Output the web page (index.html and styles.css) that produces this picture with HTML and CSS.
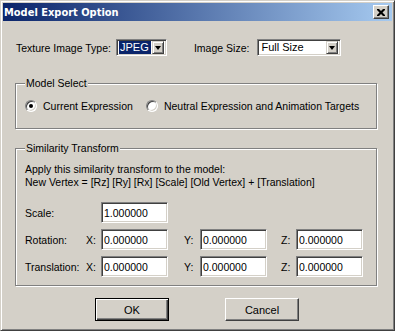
FILE: index.html
```html
<!DOCTYPE html>
<html lang="en">
<head>
    <meta charset="UTF-8">
    <link rel="stylesheet" href="styles.css">
</head>
<body>
<div class="window">
    <div class="titlebar">
        <span class="title">Model Export Option</span>
        <span class="closebtn">
            <svg width="8" height="7" viewBox="0 0 8 7"><path d="M0 0h2l2 2 2-2h2v1l-2.5 2.5L8 6v1H6L4 5 2 7H0V6l2.5-2.5L0 1z" fill="#000"/></svg>
        </span>
    </div>
    <div class="content">
        <div class="toprow">
            <span class="lbl">Texture Image Type:</span>
            <div class="combo combo-type">
                <span class="combo-val selected">JPEG</span>
                <span class="dropbtn"><i class="arrow"></i></span>
            </div>
            <span class="lbl lbl-size">Image Size:</span>
            <div class="combo combo-size">
                <span class="combo-val">Full Size</span>
                <span class="dropbtn"><i class="arrow"></i></span>
            </div>
        </div>

        <!-- model select -->
        <div class="group group-model">
            <span class="legend">Model Select</span>
            <div class="radios">
                <label class="radio"><span class="dot checked"></span>Current Expression</label>
                <label class="radio"><span class="dot"></span>Neutral Expression and Animation Targets</label>
            </div>
        </div>

        <!-- similarity transform -->
        <div class="group group-sim">
            <span class="legend">Similarity Transform</span>
            <p class="desc">Apply this similarity transform to the model:<br>New Vertex = [Rz] [Ry] [Rx] [Scale] [Old Vertex] + [Translation]</p>
            <div class="grid">
                <span class="rowlbl">Scale:</span>
                <span></span>
                <span class="field">1.000000</span>
                <span></span><span></span><span></span><span></span>

                <span class="rowlbl">Rotation:</span>
                <span class="axis">X:</span>
                <span class="field">0.000000</span>
                <span class="axis axis-y">Y:</span>
                <span class="field">0.000000</span>
                <span class="axis axis-z">Z:</span>
                <span class="field">0.000000</span>

                <span class="rowlbl">Translation:</span>
                <span class="axis">X:</span>
                <span class="field">0.000000</span>
                <span class="axis axis-y">Y:</span>
                <span class="field">0.000000</span>
                <span class="axis axis-z">Z:</span>
                <span class="field">0.000000</span>
            </div>
        </div>

        <div class="buttons">
            <span class="btn btn-default">OK</span>
            <span class="btn">Cancel</span>
        </div>
    </div>
</div>
</body>
</html>
```

FILE: styles.css
```css
* {
    margin: 0;
    padding: 0;
    box-sizing: border-box;
}

body {
    background: #d4d0c8;
    font-family: "Liberation Sans", Arial, sans-serif;
    font-size: 10.5px;
    color: #000;
    white-space: nowrap;
}

.window {
    width: 395px;
    height: 331px;
    border: 1px solid;
    border-color: #d4d0c8 #404040 #404040 #d4d0c8;
    box-shadow: inset 1px 1px 0 #fff, inset -1px -1px 0 #808080;
    padding: 2px;
    background: #d4d0c8;
}

.titlebar {
    height: 18px;
    background: linear-gradient(to right, #0a246a, #a6caf0);
    display: flex;
    align-items: center;
    justify-content: space-between;
    padding: 0 3px 0 1px;
}

.title {
    color: #fff;
    font-family: "DejaVu Sans", sans-serif;
    font-weight: bold;
    font-size: 9.9px;
}

.closebtn {
    width: 16px;
    height: 14px;
    background: #d4d0c8;
    border: 1px solid;
    border-color: #fff #404040 #404040 #fff;
    box-shadow: inset -1px -1px 0 #808080;
    display: flex;
    align-items: center;
    justify-content: center;
}

.content {
    padding: 18px 0 0 13px;
}

.toprow {
    display: flex;
    align-items: center;
    height: 17px;
}

.lbl-size {
    margin-left: 27px;
}

.combo {
    height: 17px;
    margin-left: 5px;
    background: #fff;
    border: 1px solid;
    border-color: #808080 #fff #fff #808080;
    box-shadow: inset 1px 1px 0 #404040, inset -1px -1px 0 #d4d0c8;
    display: flex;
    align-items: center;
    padding: 2px;
}

.combo-type {
    width: 51px;
}

.combo-size {
    width: 84px;
    margin-left: 8px;
}

.combo-val {
    flex: 1;
    height: 13px;
    line-height: 13px;
    padding-left: 1px;
    font-size: 11px;
}

.combo-val.selected {
    background: #0a246a;
    color: #fff;
    margin-right: 1px;
}

.dropbtn {
    width: 12px;
    height: 13px;
    background: #d4d0c8;
    border: 1px solid;
    border-color: #d4d0c8 #404040 #404040 #d4d0c8;
    box-shadow: inset 1px 1px 0 #fff, inset -1px -1px 0 #808080;
    display: flex;
    align-items: center;
    justify-content: center;
}

.arrow {
    width: 0;
    height: 0;
    border-left: 3.5px solid transparent;
    border-right: 3.5px solid transparent;
    border-top: 4px solid #000;
}

.group {
    width: 362px;
    margin-left: -1px;
    border: 1px solid #808080;
    box-shadow: inset 1px 1px 0 #fff, 1px 1px 0 #fff;
    padding: 0 9px;
}

.legend {
    display: block;
    width: max-content;
    background: #d4d0c8;
    padding: 0 1px;
    margin-top: -7px;
    height: 13px;
    line-height: 13px;
}

.group-model {
    height: 46px;
    margin-top: 27px;
}

.radios {
    display: flex;
    gap: 13px;
    margin-top: 9px;
}

.radio {
    display: flex;
    align-items: center;
    height: 13px;
}

.dot {
    width: 12px;
    height: 12px;
    border-radius: 50%;
    background: #fff;
    border: 1px solid;
    border-color: #808080 #fff #fff #808080;
    box-shadow: inset 1px 1px 0 #404040, inset -1px -1px 0 #d4d0c8;
    margin-right: 6px;
    position: relative;
}

.dot.checked::after {
    content: "";
    position: absolute;
    left: 3px;
    top: 3px;
    width: 4px;
    height: 4px;
    border-radius: 50%;
    background: #000;
}

.group-sim {
    height: 138px;
    margin-top: 19px;
}

.desc {
    line-height: 13px;
    margin-top: 8px;
}

.grid {
    display: grid;
    grid-template-columns: 61px 15px 67px 32px 67px 29px 67px;
    grid-auto-rows: 21px;
    row-gap: 6px;
    margin-top: 13px;
    align-items: center;
}

.axis-y {
    padding-left: 16px;
}

.axis-z {
    padding-left: 14px;
}

.field {
    height: 21px;
    background: #fff;
    border: 1px solid;
    border-color: #808080 #fff #fff #808080;
    box-shadow: inset 1px 1px 0 #404040, inset -1px -1px 0 #d4d0c8;
    padding: 3px 2px;
    line-height: 14px;
    font-size: 10.5px;
}

.buttons {
    display: flex;
    gap: 56px;
    margin: 12px 0 0 79px;
}

.btn {
    width: 74px;
    height: 23px;
    background: #d4d0c8;
    border: 1px solid;
    border-color: #fff #404040 #404040 #fff;
    box-shadow: inset -1px -1px 0 #808080, inset 1px 1px 0 #d4d0c8;
    display: flex;
    align-items: center;
    justify-content: center;
    font-size: 11px;
}

.btn-default {
    border: 1px solid #000;
    box-shadow: inset 1px 1px 0 #fff, inset -1px -1px 0 #404040, inset -2px -2px 0 #808080;
}
```
